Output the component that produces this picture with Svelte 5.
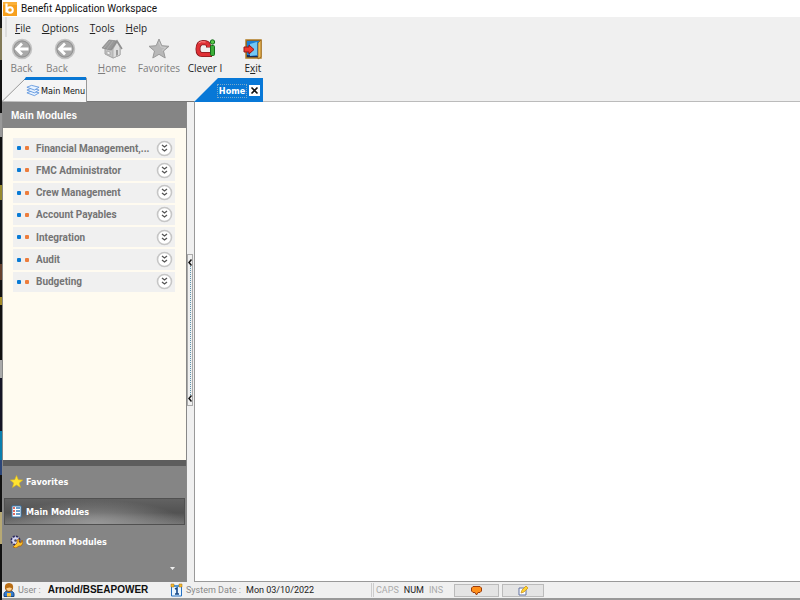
<script>
  const menus = ['File', 'Options', 'Tools', 'Help'];
  const modules = [
    'Financial Management,...',
    'FMC Administrator',
    'Crew Management',
    'Account Payables',
    'Integration',
    'Audit',
    'Budgeting'
  ];
</script>

{#snippet backIcon()}
  <svg width="22" height="22" viewBox="0 0 22 22" aria-hidden="true">
    <circle cx="11" cy="11" r="9.500" fill="#a9a9a9" stroke="#c4c4c4" stroke-width="1.500" />
    <circle cx="11" cy="11" r="8" fill="none" stroke="#939393" />
    <path d="M11 5.500 5.500 11l5.500 5.500M6 11h11.500" fill="none" stroke="#fff" stroke-width="2.800" />
  </svg>
{/snippet}

<div class="desktop">
  <div class="app">
    <header class="title">
      <svg width="15" height="15" viewBox="0 0 15 15" aria-hidden="true">
        <rect x="1" y="1" width="14" height="14" fill="#f7a01d" />
        <rect x="1" y="1" width="14" height="3" fill="#fbb13a" />
        <path d="M4.500 2.500v9" stroke="#fff" stroke-width="2.200" />
        <circle cx="8" cy="9" r="2.800" fill="none" stroke="#fff" stroke-width="2" />
      </svg>
      <h1>Benefit Application Workspace</h1>
    </header>

    <nav class="menu">
      {#each menus as m}
        <button><u>{m[0]}</u>{m.slice(1)}</button>
      {/each}
    </nav>

    <div class="tools" role="toolbar" aria-label="Main">
      <button class="tool back" disabled>{@render backIcon()}<span>Back</span></button>
      <button class="tool back second" disabled>{@render backIcon()}<span>Back</span></button>
      <button class="tool home" disabled>
        <svg width="22" height="22" viewBox="0 0 22 22" aria-hidden="true">
          <path d="M4 9v7l8 4 7-3V9l-5-6z" fill="#c4c4c4" stroke="#a2a2a2" />
          <path d="M12 11v9l7-3V9l-3-5z" fill="#dedede" stroke="#a0a0a0" stroke-width=".7" />
          <path d="M1 10 8 2l8 1-6 9z" fill="#999" stroke="#858585" stroke-width=".7" />
          <path d="m10 12 6-9 5 8" fill="none" stroke="#909090" stroke-width="1.500" />
          <path d="M3 10 9 3M6 11l6-8" stroke="#b3b3b3" stroke-width=".7" />
          <path d="M15 12h2v5l-2 1z" fill="#999" /><path d="m6 13 3 1v3l-3-1z" fill="#eee" stroke="#999" stroke-width=".6" />
        </svg>
        <span><u>H</u>ome</span>
      </button>
      <button class="tool fav" disabled>
        <svg width="22" height="22" viewBox="0 0 22 22" aria-hidden="true">
          <path d="m11 1 2.800 6.700 7.200.6-5.500 4.700 1.700 7-6.200-3.700L4.800 20l1.700-7L1 8.300l7.200-.6z" fill="#b8b8b8" stroke="#999" />
          <path d="m11 4 2 5 5 .5-4 3" fill="none" stroke="#ccc" />
        </svg>
        <span>Favorites</span>
      </button>
      <button class="tool clever">
        <svg width="22" height="22" viewBox="0 0 22 22" aria-hidden="true">
          <path d="M14.500 9.500V7.500Q14 4.500 9 4.500 4 5 4 11q0 5.500 4 5.500h10" fill="none" stroke="#86191d" stroke-width="5" />
          <path d="M14.500 9V7.500Q14 4.500 9 4.500 4 5 4 11q0 5.500 4 5.500h9.500" fill="none" stroke="#df3035" stroke-width="3.400" />
          <path d="M4.500 5q2-2 7-1" fill="none" stroke="#ff8e8e" />
          <rect x="16.500" y="7.500" width="4" height="10" rx="1" fill="#3cae38" stroke="#176c1f" />
          <circle cx="18.500" cy="4" r="2.200" fill="#58c847" stroke="#176c1f" />
        </svg>
        <span>Clever I</span>
      </button>
      <button class="tool exit">
        <svg width="22" height="22" viewBox="0 0 22 22" aria-hidden="true">
          <path d="M4 20V2h15v18H4z" fill="#1c2c55" stroke="#b07b22" stroke-width="1.500" />
          <path d="M5 3h13v15h-3L5 17z" fill="#1b7fd4" />
          <path d="m8 6 7-2v13l-7 1z" fill="#73c8f5" />
          <path d="m16 5 3-3v17l-3 2z" fill="#f1c05b" stroke="#915b15" stroke-width=".7" />
          <path d="M2 9h5V7l5 4.500L7 16v-2H2z" fill="#f0392f" stroke="#951616" />
        </svg>
        <span>E<u>x</u>it</span>
      </button>
    </div>

    <div class="tabs">
      <div class="tabside">
        <button class="tab main">
          <svg class="shape" viewBox="0 0 85 26" preserveAspectRatio="none" aria-hidden="true">
            <path d="M0 25.500 24 2h60.500v24" fill="#f5f5f5" stroke="#999" /><path d="M24 1h60v3H22z" fill="#0877d4" />
          </svg>
          <svg width="14" height="13" viewBox="0 0 15 13" aria-hidden="true">
            <g fill="#e8f3ff" stroke="#5b93dc" stroke-width=".9">
              <path d="m1 9 5-2 8 2-5 3z" /><path d="m1 6 5-2 8 2-5 3z" /><path d="m1 3 5-2 8 2-5 3z" />
            </g>
          </svg>
          <span>Main Menu</span>
        </button>
      </div>
      <div class="tab doc">
        <button class="hometab">Home</button>
        <button class="close" aria-label="Close Home">
          <svg width="11" height="11" viewBox="0 0 11 11" aria-hidden="true"><path d="m2.500 2.500 6 6M8.500 2.500l-6 6" stroke="#111" stroke-width="1.600" /></svg>
        </button>
      </div>
    </div>

    <div class="work">
      <aside>
        <h2>Main Modules</h2>
        <div class="list">
          <ul class="modules">
            {#each modules as name}
              <li>
                <button>
                  <i class="blue"></i><i class="orange"></i><span>{name}</span>
                  <svg width="17" height="17" viewBox="0 0 17 17" aria-hidden="true">
                    <circle cx="8.500" cy="8.500" r="7" fill="#fff" stroke="#c6c6c6" stroke-width="1.600" />
                    <path d="m6 5 2.500 2L11 5M6 9l2.500 2L11 9" fill="none" stroke="#555" stroke-width="1.300" />
                  </svg>
                </button>
              </li>
            {/each}
          </ul>
        </div>
        <div class="groups">
          <button>
            <svg width="13" height="13" viewBox="0 0 13 13" aria-hidden="true"><path d="m6.500.5 1.800 4.200 4.500.3-3.500 3 1.200 4.500-4-2.500-4 2.500L3.700 8 .2 5l4.500-.3z" fill="#ffe32f" stroke="#d9b51d" stroke-width=".6" /></svg>
            Favorites
          </button>
          <button class="active">
            <svg width="13" height="13" viewBox="0 0 13 13" aria-hidden="true"><path d="M2 1h9v11H2z" fill="#fff" stroke="#3a78ad" /><path d="M3 3h2M3 6h2M3 9h2" stroke="#d43f32" stroke-width="1.600" /><path d="M6 3h4M6 6h4M6 9h4" stroke="#367db8" stroke-width="1.300" /></svg>
            Main Modules
          </button>
          <button>
            <svg width="13" height="13" viewBox="0 0 13 13" aria-hidden="true"><circle cx="5.500" cy="5.500" r="4" fill="#d6d6f2" stroke="#2e2c62" stroke-width="2" stroke-dasharray="2 1.140" /><circle cx="5.500" cy="5.500" r="3.300" fill="#d6d6f2" /><circle cx="5.500" cy="5.500" r="1.300" fill="#4c4c5d" /><path d="m3 12 4-4V5l2-1v3l2 1 1-3 1 3-2 3H9l-3 2z" fill="#ffc529" stroke="#a45a09" stroke-width=".7" /></svg>
            Common Modules
          </button>
          <button class="more" aria-label="Configure buttons"><svg width="5" height="3" viewBox="0 0 5 3" aria-hidden="true"><path d="M0 0h5L2.500 3z" fill="#eee" /></svg></button>
        </div>
      </aside>
      <div class="split">
        <button class="grip" aria-label="Collapse sidebar">
          <svg width="4" height="7" viewBox="0 0 4 7" aria-hidden="true"><path d="M3.500.5 1 3.500l2.500 3" fill="none" stroke="#111" stroke-width="1.500" /></svg>
          <span></span>
          <svg width="4" height="7" viewBox="0 0 4 7" aria-hidden="true"><path d="M3.500.5 1 3.500l2.500 3" fill="none" stroke="#111" stroke-width="1.500" /></svg>
        </button>
      </div>
      <main></main>
    </div>

    <footer>
      <div class="user">
        <svg width="12" height="14" viewBox="0 0 12 14" aria-hidden="true"><path d="M1 13.500V11q0-3 5-3t5 3v2.500z" fill="#347bd0" stroke="#194781" /><circle cx="6" cy="5" r="3.500" fill="#ffd08b" stroke="#8a4e12" /><path d="M2 6q-1-6 4-6t4 6q-3-3-8 0z" fill="#b86d15" /><path d="M4 10h4v3.500H4z" fill="#ffc23c" /></svg>
        <span class="muted">User :</span><b>Arnold/BSEAPOWER</b>
      </div>
      <div class="date">
        <svg width="13" height="14" viewBox="0 0 13 14" aria-hidden="true"><path d="M1.500 3h10v10h-10z" fill="#eaf6ff" stroke="#2470c2" /><path d="M2 3h9" stroke="#5099d9" stroke-width="2" /><path d="m5 6 2-1v6M5 11h4" fill="none" stroke="#164887" stroke-width="1.600" /><path d="M1 1h3v3H1zM9 1h3v3H9z" fill="#f6bd31" stroke="#a36b13" stroke-width=".5" /></svg>
        <span class="muted">System Date :</span><span class="value">Mon 03/10/2022</span>
      </div>
      <div class="keys"><span>CAPS</span><span class="on">NUM</span><span>INS</span></div>
      <button class="state" aria-label="Messages"><svg width="11" height="10" viewBox="0 0 11 10" aria-hidden="true"><path d="M2 .5h7L10.500 2v3L9 6.500H7L5.500 9 4 6.500H2L.5 5V2z" fill="#ff901b" stroke="#9b3b0d" /></svg></button>
      <button class="state small" aria-label="Notes"><svg width="11" height="11" viewBox="0 0 11 11" aria-hidden="true"><path d="M1 3h7v7H1z" fill="#fff" stroke="#6272a0" /><path d="m4 5 4-4 2 2-4 4-3 1z" fill="#ffd333" stroke="#c78d12" stroke-width=".7" /></svg></button>
    </footer>
  </div>
</div>

<style>
  :global(body) { margin: 0; background: #f0f0f0; }
  * { box-sizing: border-box; }
  button { margin: 0; padding: 0; border: 0; background: none; font: inherit; color: inherit; text-align: left; }
  svg { display: block; flex: none; }
  u { text-underline-offset: 1px; }
  .desktop {
    display: flex; height: 100vh; padding-left: 2px; font: 9px/14px "DejaVu Sans Condensed", "DejaVu Sans", sans-serif; color: #222;
    background: linear-gradient(#161616 0 28px, #817957 28px 60px, #111 60px 113px, #999 113px 137px, #111 137px 185px, #988a2c 185px 200px, #151515 200px 264px, #65402d 264px 280px, #111 280px 297px, #a38b28 297px 305px, #111 305px 360px, #aaa 360px 378px, #151525 378px 431px, #097fae 431px 460px, #2b4578 460px 475px, #111 475px 512px, #b7a974 512px 544px, #111 544px);
  }
  .app { display: flex; flex: 1; min-width: 0; flex-direction: column; background: #f0f0f0; }
  .title { display: flex; align-items: center; gap: 4px; height: 17px; background: #fff; }
  h1 { margin: 0; font: 10px/14px Roboto, sans-serif; color: #111; }
  .menu, .tools { font: 10px/14px "Open Sans", sans-serif; }
  .menu { display: flex; gap: 11px; height: 20px; padding: 2px 0 0 8px; margin-left: 3px; align-items: center; border-left: 2px solid #ddd; }
  .tools { display: flex; height: 39px; padding-left: 5px; }
  .tool { display: flex; flex-direction: column; align-items: center; white-space: nowrap; gap: 1px; padding-top: 1px; }
  .tool:disabled { color: #7d7d7d; }
  .back { width: 29px; }
  .second { margin-left: 14px; }
  .second span { margin-right: 15px; }
  .home { width: 40px; margin-left: 13px; }
  .fav { width: 48px; margin-left: 3px; }
  .clever { width: 40px; margin-left: 2px; }
  .exit { width: 40px; margin-left: 8px; }
  .tabs { display: flex; height: 26px; border-bottom: 1px solid #bbb; }
  .tabside { flex: 0 0 192px; border-bottom: 1px solid #777; margin-bottom: -1px; }
  .main { position: relative; display: flex; align-items: center; gap: 1px; width: 85px; height: 26px; padding: 3px 0 0 24px; color: #111; white-space: nowrap; }
  .main > :not(.shape) { position: relative; }
  .shape { position: absolute; inset: 0; width: 100%; height: 100%; }
  .doc { display: flex; align-items: center; gap: 2px; width: 69px; height: 26px; padding: 3px 0 0 23px; background: #0878d7; clip-path: polygon(0 100%, 24px 2px, 100% 2px, 100% 100%); }
  .hometab { border: 1px dotted #7aa9ca; width: 30px; height: 14px; line-height: 12px; font-weight: bold; color: #fff; text-align: center; }
  .close { width: 11px; height: 11px; background: #fff; }
  .work { display: flex; flex: 1; min-height: 0; }
  aside { display: flex; flex: 0 0 185px; flex-direction: column; border-left: 1px solid #888; border-right: 1px solid #888; background: #fffbf0; }
  h2 { margin: 0; height: 26px; padding-left: 8px; font: bold 10px/27px "Liberation Sans", sans-serif; color: #fff; background: #858585; }
  .list { flex: 1; padding: 10px 11px 0 10px; }
  .modules { display: grid; grid-auto-rows: 1fr; gap: 2px; height: 154px; list-style: none; margin: 0; padding: 0; }
  .modules li { display: flex; background: #f0f0f0; }
  .modules button { display: flex; align-items: center; flex: 1; padding: 0 2px 0 4px; font: bold 10px/14px Roboto, sans-serif; color: #747474; }
  .modules span { flex: 1; padding-top: 1px; white-space: nowrap; }
  .modules i { width: 4px; height: 4px; margin-right: 4px; border-radius: 1px; }
  .modules i.orange { margin-right: 7px; }
  .blue { background: #087bd5; }
  .orange { background: #ed7d3d; }
  .groups { height: 122px; padding: 2px 1px 0; border-top: 6px solid #5d5d5d; background: #858585; }
  .groups button { display: flex; align-items: center; gap: 3px; width: 100%; height: 27px; margin-bottom: 3px; padding-left: 5px; border: 1px solid transparent; font-weight: bold; color: #fff; }
  .groups .active { border-color: #505050; background: radial-gradient(ellipse 90px 24px at 50% 100%, #999, transparent), linear-gradient(#626262, #525252 55%, #747474); }
  .groups .more { height: 20px; padding-right: 9px; justify-content: flex-end; }
  .split { display: flex; align-items: center; flex: 0 0 7px; }
  .grip { display: flex; flex-direction: column; align-items: center; justify-content: space-between; width: 6px; height: 152px; margin-bottom: 24px; padding: 4px 0 3px; border: 1px solid #aaa; }
  .grip span { flex: 1; width: 0; border-left: 1px dotted #5b93ad; }
  main { flex: 1; border: 1px solid #999; border-top: 0; border-right: 0; background: #fff; }
  footer { display: flex; align-items: center; height: 18px; border-bottom: 2px solid #999; font: 9px/14px Roboto, sans-serif; white-space: nowrap; }
  .user, .date { display: flex; align-items: center; gap: 3px; }
  .user { width: 168px; padding-left: 1px; }
  .date { width: 201px; }
  .user b { margin-left: 4px; font: bold 10px/14px "Liberation Sans", sans-serif; color: #111; }
  .muted { color: #888; }
  .value { margin-left: 2px; }
  .keys { display: flex; gap: 5px; width: 83px; padding-left: 2px; border-left: 3px double #ccc; color: #aaa; }
  .keys .on { color: #222; }
  .state { display: flex; align-items: center; justify-content: center; width: 45px; height: 13px; margin: 1px 3px 0 0; border: 1px solid #bbb; background: #e4e4e4; }
  .small { width: 42px; }
</style>
